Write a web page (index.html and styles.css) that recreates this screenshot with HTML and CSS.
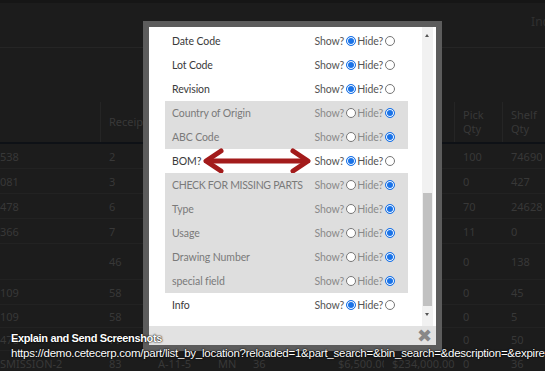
FILE: index.html
```html
<!DOCTYPE html>
<html lang="en">
<head>
  <meta charset="UTF-8">
  <meta name="viewport" content="width=device-width, initial-scale=1.0">
  <title>Parts by location</title>
  <link rel="stylesheet" href="styles.css">
</head>
<body>
  <div class="page">
    <div class="topstrip"></div>
    <div class="filters"><span class="incl">Include</span></div>

    <div class="grid">
      <div class="row head">
        <span class="c1 sep"></span><span class="c2">Receipt</span><span class="c3"></span><span class="c4"></span><span class="c5"></span><span class="c6"></span><span class="c7 sep"></span><span class="c8 sep">Pick<br>Qty</span><span class="c9">Shelf<br>Qty</span>
      </div>
      <div class="row"><span class="c1">538</span><span class="c2">2</span><span class="c3"></span><span class="c4"></span><span class="c5"></span><span class="c6"></span><span class="c7"></span><span class="c8">100</span><span class="c9">74690</span></div>
      <div class="row"><span class="c1">081</span><span class="c2">3</span><span class="c3"></span><span class="c4"></span><span class="c5"></span><span class="c6"></span><span class="c7"></span><span class="c8">0</span><span class="c9">427</span></div>
      <div class="row"><span class="c1">478</span><span class="c2">6</span><span class="c3"></span><span class="c4"></span><span class="c5"></span><span class="c6"></span><span class="c7"></span><span class="c8">70</span><span class="c9">24628</span></div>
      <div class="row"><span class="c1">366</span><span class="c2">7</span><span class="c3"></span><span class="c4"></span><span class="c5"></span><span class="c6"></span><span class="c7"></span><span class="c8">11</span><span class="c9">0</span></div>
      <div class="row tall"><span class="c1"></span><span class="c2">46</span><span class="c3"></span><span class="c4"></span><span class="c5"></span><span class="c6"></span><span class="c7"></span><span class="c8">0</span><span class="c9">138</span></div>
      <div class="row"><span class="c1">109</span><span class="c2">58</span><span class="c3"></span><span class="c4"></span><span class="c5"></span><span class="c6"></span><span class="c7"></span><span class="c8">0</span><span class="c9">45</span></div>
      <div class="row short"><span class="c1">109</span><span class="c2">58</span><span class="c3"></span><span class="c4"></span><span class="c5"></span><span class="c6"></span><span class="c7"></span><span class="c8">0</span><span class="c9">5</span></div>
      <div class="row short"><span class="c1">478</span><span class="c2">77</span><span class="c3"></span><span class="c4"></span><span class="c5"></span><span class="c6"></span><span class="c7"></span><span class="c8">0</span><span class="c9">50</span></div>
      <div class="row"><span class="c1">SMISSION-2</span><span class="c2">83</span><span class="c3">A-11-5</span><span class="c4">MN</span><span class="c5">36</span><span class="c6">$6,500.00</span><span class="c7">$234,000.00</span><span class="c8">0</span><span class="c9">36</span></div>
    </div>
  </div>

  <div class="modal">
    <div class="modal-body">
      <ul class="fields">
        <li class="field"><span class="name">Date Code</span><span class="opts">Show?<i class="radio on"></i>Hide?<i class="radio"></i></span></li>
        <li class="field"><span class="name">Lot Code</span><span class="opts">Show?<i class="radio on"></i>Hide?<i class="radio"></i></span></li>
        <li class="field"><span class="name">Revision</span><span class="opts">Show?<i class="radio on"></i>Hide?<i class="radio"></i></span></li>
        <li class="field off"><span class="name">Country of Origin</span><span class="opts">Show?<i class="radio"></i>Hide?<i class="radio on"></i></span></li>
        <li class="field off"><span class="name">ABC Code</span><span class="opts">Show?<i class="radio"></i>Hide?<i class="radio on"></i></span></li>
        <li class="field"><span class="name">BOM?</span><span class="opts">Show?<i class="radio on"></i>Hide?<i class="radio"></i></span>
          <svg class="arrow" width="116" height="26" viewBox="0 0 116 26">
            <g fill="none" stroke="#a31b1b" stroke-width="5" stroke-linecap="round" stroke-linejoin="round">
              <path d="M19 3 L4 13 L19 23"/>
              <path d="M6 13 L104 13"/>
              <path d="M91 3 L106 13 L91 23"/>
            </g>
          </svg>
        </li>
        <li class="field off"><span class="name caps">CHECK FOR MISSING PARTS</span><span class="opts">Show?<i class="radio"></i>Hide?<i class="radio on"></i></span></li>
        <li class="field off"><span class="name">Type</span><span class="opts">Show?<i class="radio"></i>Hide?<i class="radio on"></i></span></li>
        <li class="field off"><span class="name">Usage</span><span class="opts">Show?<i class="radio"></i>Hide?<i class="radio on"></i></span></li>
        <li class="field off"><span class="name">Drawing Number</span><span class="opts">Show?<i class="radio"></i>Hide?<i class="radio on"></i></span></li>
        <li class="field off"><span class="name">special field</span><span class="opts">Show?<i class="radio"></i>Hide?<i class="radio on"></i></span></li>
        <li class="field"><span class="name">Info</span><span class="opts">Show?<i class="radio on"></i>Hide?<i class="radio"></i></span></li>
      </ul>
      <div class="scrollbar">
        <div class="sb-btn up"></div>
        <div class="sb-track"></div>
        <div class="sb-thumb"></div>
        <div class="sb-btn down"></div>
      </div>
    </div>
    <div class="modal-foot"><span class="close">&#10006;</span></div>
  </div>

  <div class="caption">
    <div class="cap-title">Explain and Send Screenshots</div>
    <div class="cap-url">https://demo.cetecerp.com/part/list_by_location?reloaded=1&amp;part_search=&amp;bin_search=&amp;description=&amp;expire=&amp;location=</div>
  </div>
</body>
</html>
```

FILE: styles.css
```css
body { margin: 0; background: #1c1c1c; font-family: "Noto Sans", Arial, sans-serif; width: 545px; height: 371px; overflow: hidden; position: relative; }

/* dimmed page behind the modal */
.page { color: #383838; font-size: 11px; }
.topstrip { height: 3px; background: #161616; }
.filters { height: 45px; border-bottom: 1px solid #252525; display: flex; justify-content: flex-end; align-items: flex-start; padding-top: 10px; box-sizing: border-box; overflow: hidden; }
.incl { font-size: 12px; color: #303030; margin-right: -28px; }
.grid { margin-top: 54px; }
.row { display: grid; grid-template-columns: 101px 49px 60px 35px 85px 54px 71px 48px 42px; height: 24px; align-items: center; border-bottom: 1px solid #222; }
.row span { padding-left: 8px; white-space: nowrap; overflow: hidden; }
.row .c1 { padding-left: 0; }
.row.head { height: 40px; border-bottom: 2px solid #0e1116; line-height: 14px; }
.row.head span { height: 100%; display: flex; align-items: center; }
.row.head .sep { border-right: 1px solid #252525; }
.row.tall { height: 35px; }
.row.short { height: 22px; }

/* modal */
.modal { position: absolute; left: 143px; top: 21px; width: 287px; border: 6px solid #5c5c5c; background: #fff; }
.modal-body { display: flex; height: 299px; }
.fields { list-style: none; margin: 0; padding: 2px 14px 0 16px; flex: 1; font-family: Lato, "Noto Sans", sans-serif; font-size: 10.5px; letter-spacing: -0.1px; color: #3a3a3a; }
.field { display: flex; align-items: center; height: 24px; padding: 0 12px 0 7px; position: relative; white-space: nowrap; }
.field.off { background: #dedede; color: #7a7a7a; }
.name { flex: 1; }
.name.caps { letter-spacing: -0.3px; }
.opts { display: flex; align-items: center; color: #555; }
.field.off .opts { color: #8a8a8a; }
.radio { width: 8px; height: 8px; border: 1px solid #767676; border-radius: 50%; background: #fff; margin: 0 1px 0 2px; }
.radio.on { background: #1a73e8; border-color: #1a73e8; box-shadow: inset 0 0 0 1px #fff; }
.arrow { position: absolute; left: 37px; top: -1px; }

.scrollbar { width: 11px; margin: 0 3px 0 0; background: #f1f1f1; display: flex; flex-direction: column; }
.sb-btn { height: 17px; position: relative; }
.sb-btn::after { content: ""; position: absolute; left: 3px; border-left: 2.5px solid transparent; border-right: 2.5px solid transparent; }
.sb-btn.up::after { top: 7px; border-bottom: 3px solid #555; }
.sb-btn.down::after { top: 7px; border-top: 3px solid #555; }
.sb-track { height: 149px; }
.sb-thumb { height: 113px; background: #c1c1c1; margin: 0 1px; }

.modal-foot { height: 19px; background: #e2e2e2; display: flex; justify-content: flex-end; align-items: center; padding-right: 4px; }
.close { color: #888; font-size: 18px; font-family: "DejaVu Sans", sans-serif; line-height: 1; }

/* screenshot caption */
.caption { position: absolute; left: 11px; top: 331px; color: #fff; font-family: "Liberation Sans", Arial, sans-serif; line-height: 15px; white-space: nowrap; text-shadow: 0 0 2px #000, 0 0 1px #000; }
.cap-title { font-size: 11px; font-weight: bold; letter-spacing: -0.35px; }
.cap-url { font-size: 11.5px; letter-spacing: -0.25px; }
```
